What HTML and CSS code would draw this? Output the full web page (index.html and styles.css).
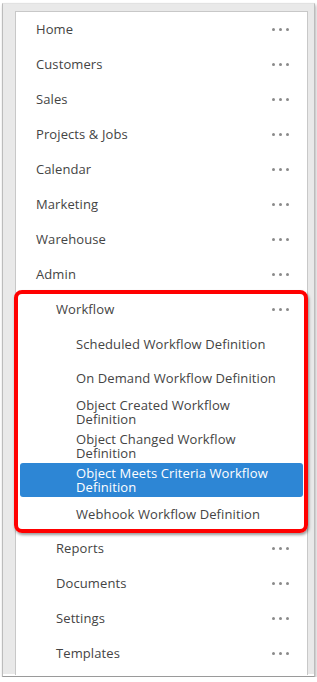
FILE: index.html
```html
<!DOCTYPE html>
<html lang="en">
<head>
    <meta charset="UTF-8">
    <meta name="viewport" content="width=device-width, initial-scale=1.0">
    <title>Navigation</title>
    <link rel="stylesheet" href="styles.css">
</head>
<body>
    <div class="frame">
        <div class="app">
            <nav class="panel">
                <ul class="menu">
                    <li class="item lvl-0"><span class="label">Home</span><span class="dots"><i></i><i></i><i></i></span></li>
                    <li class="item lvl-0"><span class="label">Customers</span><span class="dots"><i></i><i></i><i></i></span></li>
                    <li class="item lvl-0"><span class="label">Sales</span><span class="dots"><i></i><i></i><i></i></span></li>
                    <li class="item lvl-0"><span class="label">Projects &amp; Jobs</span><span class="dots"><i></i><i></i><i></i></span></li>
                    <li class="item lvl-0"><span class="label">Calendar</span><span class="dots"><i></i><i></i><i></i></span></li>
                    <li class="item lvl-0"><span class="label">Marketing</span><span class="dots"><i></i><i></i><i></i></span></li>
                    <li class="item lvl-0"><span class="label">Warehouse</span><span class="dots"><i></i><i></i><i></i></span></li>
                    <li class="item lvl-0"><span class="label">Admin</span><span class="dots"><i></i><i></i><i></i></span></li>
                    <li class="item lvl-1"><span class="label">Workflow</span><span class="dots"><i></i><i></i><i></i></span></li>
                    <li class="item lvl-2"><span class="label">Scheduled Workflow Definition</span></li>
                    <li class="item lvl-2"><span class="label">On Demand Workflow Definition</span></li>
                    <li class="item lvl-2 two-line"><span class="label">Object Created Workflow Definition</span></li>
                    <li class="item lvl-2 two-line"><span class="label">Object Changed Workflow Definition</span></li>
                    <li class="item lvl-2 two-line active"><span class="label">Object Meets Criteria Workflow Definition</span></li>
                    <li class="item lvl-2"><span class="label">Webhook Workflow Definition</span></li>
                    <li class="item lvl-1"><span class="label">Reports</span><span class="dots"><i></i><i></i><i></i></span></li>
                    <li class="item lvl-1"><span class="label">Documents</span><span class="dots"><i></i><i></i><i></i></span></li>
                    <li class="item lvl-1"><span class="label">Settings</span><span class="dots"><i></i><i></i><i></i></span></li>
                    <li class="item lvl-1"><span class="label">Templates</span><span class="dots"><i></i><i></i><i></i></span></li>
                </ul>
            </nav>
        </div>
        <!-- annotation box drawn over the workflow group -->
        <div class="callout"></div>
    </div>
</body>
</html>
```

FILE: styles.css
```css
body {
    margin: 0;
    background-color: #fff;
    font-family: "Open Sans", "Noto Sans", Arial, sans-serif;
    color: #444;
}

.frame {
    position: relative;
    width: 311px;
    margin: 3px 0 0 2px;
    padding-bottom: 2px;
    background-color: #fff;
    border: 1px solid #bcbcbc;
    border-top-color: #e2e2e2;
    border-bottom-color: #9a9a9a;
    box-shadow: 1px 2px 3px rgba(0, 0, 0, 0.3);
}

.app {
    height: 663px;
    padding: 7px 6px 0 12px;
    background-color: #e9e9e9;
}

.panel {
    height: 663px;
    background-color: #fff;
    border: 1px solid #c8c8c8;
    border-bottom: none;
    overflow: hidden;
}

.menu {
    list-style-type: none;
    margin: 0;
    padding: 0;
}

.item {
    display: flex;
    align-items: center;
    justify-content: space-between;
    height: 35px;
    margin: 0 4px;
    padding-right: 14px;
    font-size: 13px;
    line-height: 17px;
    letter-spacing: 0.1px;
    box-sizing: border-box;
}

.lvl-0 {
    padding-left: 16px;
}

.lvl-1 {
    padding-left: 36px;
}

.lvl-2 {
    height: 34px;
    padding-left: 56px;
}

.two-line {
    line-height: 14px;
}

.active {
    background-color: #2d86d5;
    color: #fff;
    border-radius: 3px;
}

.dots {
    display: flex;
    gap: 4px;
}

.dots i {
    display: block;
    width: 3px;
    height: 3px;
    border-radius: 50%;
    background-color: #8a8a8a;
}

.callout {
    position: absolute;
    left: 11px;
    top: 286px;
    width: 294px;
    height: 243px;
    box-sizing: border-box;
    border: 4px solid #f00;
    border-radius: 8px;
    box-shadow: 1px 2px 3px rgba(0, 0, 0, 0.4);
    pointer-events: none;
}
```
